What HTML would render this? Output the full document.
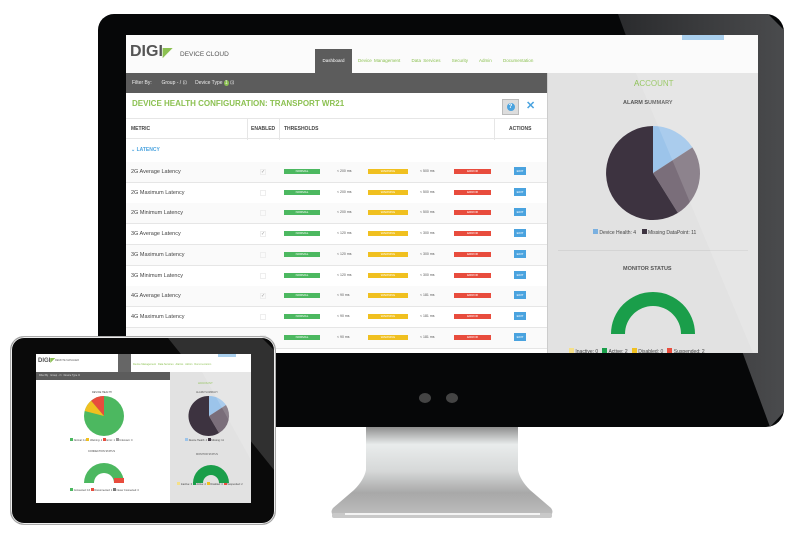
<!DOCTYPE html>
<html><head><meta charset="utf-8"><style>
*{margin:0;padding:0;box-sizing:border-box}
body{width:800px;height:537px;background:#fff;position:relative;overflow:hidden;font-family:"Liberation Sans",sans-serif}
.a{position:absolute}
.row{position:absolute;left:126px;width:421px;height:21px;border-bottom:1px solid #e6e6e6;font-size:5.5px;color:#444}
.row .l{position:absolute;left:5px;top:7px}
.b{position:absolute;top:7px;height:5px;font-size:3px;color:#fff;text-align:center;line-height:5px}
.g{background:#4cb860;left:158px;width:36px}
.y{background:#f0c020;left:242px;width:40px}
.r{background:#e84c3d;left:328px;width:37px}
.t{position:absolute;top:7px;font-size:3.5px;color:#555}
.e{position:absolute;left:388px;top:5px;width:12px;height:8px;background:#4aa3df;font-size:3px;color:#fff;text-align:center;line-height:8px}
.cb{position:absolute;left:134px;top:7px;width:6px;height:6px;border:1px solid #eee;font-size:5px;color:#999;line-height:4px;text-align:center}
.sq{display:inline-block;width:3px;height:3px}
</style></head><body>
<!-- monitor bezel -->
<div class="a" style="left:98px;top:14px;width:686px;height:413px;background:#060708;border-radius:16px 18px 18px 14px"></div>
<svg class="a" style="left:0;top:0" width="800" height="537"><defs><linearGradient id="bz" x1="0" y1="0" x2="1" y2="0"><stop offset="0" stop-color="#2a2b2d"/><stop offset="1" stop-color="#4a4b4d"/></linearGradient></defs><polygon points="618,14 768,14 784,30 784,412 770,427" fill="url(#bz)"/></svg>
<!-- stand -->
<svg class="a" style="left:0;top:0" width="800" height="537"><defs><linearGradient id="st" x1="0" y1="0" x2="0" y2="1"><stop offset="0" stop-color="#8e8e8e"/><stop offset="0.2" stop-color="#e9ecec"/><stop offset="0.5" stop-color="#d6d8d8"/><stop offset="0.75" stop-color="#a8a8a8"/><stop offset="1" stop-color="#bdbdbd"/></linearGradient></defs>
<path d="M366,427 L518,427 L518,470 Q520,480 530,490 L551,508 Q554,512 551,515 L333,515 Q330,512 333,508 L354,490 Q364,480 366,470 Z" fill="url(#st)"/>
<rect x="332" y="513" width="220" height="5" rx="2" fill="#c9c9c9"/><rect x="345" y="513" width="195" height="2" fill="#f4f4f4"/></svg>
<div class="a" style="left:419px;top:393px;width:12px;height:10px;border-radius:50%;background:#444"></div>
<div class="a" style="left:446px;top:393px;width:12px;height:10px;border-radius:50%;background:#444"></div>
<!-- screen -->
<div class="a" style="left:126px;top:35px;width:632px;height:318px;background:#fff;overflow:hidden">
 <div class="a" style="left:0;top:0;width:632px;height:38px;background:#fbfbfb"></div>
 <div class="a" style="left:4px;top:8px;font-size:16px;font-weight:bold;color:#555">DIGI<span style="color:#8cc152;font-size:12px">◤</span></div>
 <div class="a" style="left:54px;top:16px;font-size:6.5px;color:#555">DEVICE CLOUD</div>
 <div class="a" style="left:189px;top:14px;width:37px;height:24px;background:#5c5c5c;color:#fff;font-size:4.5px;text-align:center;line-height:24px">Dashboard</div>
 <div class="a" style="left:232px;top:23px;font-size:4.5px;color:#8cc152;word-spacing:1px">Device Management &nbsp;&nbsp;&nbsp; Data Services &nbsp;&nbsp;&nbsp; Security &nbsp;&nbsp;&nbsp; Admin &nbsp;&nbsp;&nbsp; Documentation</div>
 <div class="a" style="left:556px;top:0;width:42px;height:5px;background:#9cc8ec"></div>
 <div class="a" style="left:0;top:38px;width:421px;height:20px;background:#5c5c5c;color:#eee;font-size:5px;line-height:20px;padding-left:6px">Filter By: &nbsp;&nbsp;&nbsp;&nbsp;&nbsp; Group - / ⊡ &nbsp;&nbsp;&nbsp;&nbsp; Device Type <span style="background:#8cc152;border-radius:50%;padding:0 1px">1</span> ⊡</div>
 <div class="a" style="left:6px;top:64px;font-size:8px;font-weight:bold;color:#8cc152">DEVICE HEALTH CONFIGURATION: TRANSPORT WR21</div>
 <div class="a" style="left:376px;top:64px;width:17px;height:16px;background:#ddd;border:1px solid #bbb"><div style="margin:3px auto;width:8px;height:8px;border-radius:50%;background:#4aa3df;color:#fff;font-size:6px;text-align:center;line-height:8px;font-weight:bold">?</div></div>
 <div class="a" style="left:400px;top:64px;font-size:11px;font-weight:bold;color:#4aa3df">✕</div>
 <div class="a" style="left:0;top:83px;width:421px;height:21px;border-top:1px solid #e6e6e6;border-bottom:1px solid #e6e6e6;font-size:5px;font-weight:bold;color:#444">
  <span class="a" style="left:5px;top:7px">METRIC</span><span class="a" style="left:125px;top:7px">ENABLED</span><span class="a" style="left:158px;top:7px">THRESHOLDS</span><span class="a" style="left:383px;top:7px">ACTIONS</span>
  <div class="a" style="left:121px;top:0;width:1px;height:21px;background:#e6e6e6"></div><div class="a" style="left:153px;top:0;width:1px;height:21px;background:#e6e6e6"></div><div class="a" style="left:368px;top:0;width:1px;height:21px;background:#e6e6e6"></div>
 </div>
 <div class="a" style="left:5px;top:112px;font-size:5px;color:#4aa3df;font-weight:bold">⌄ LATENCY</div>
 <div class="a" style="left:421px;top:38px;width:211px;height:280px;background:#e2e2e2"></div>
 <div class="a" style="left:421px;top:38px;width:1px;height:280px;background:#ccc"></div>
 <div class="a" style="left:508px;top:44px;font-size:8px;color:#8cc152">ACCOUNT</div>
 <div class="a" style="left:497px;top:65px;font-size:5.5px;font-weight:bold;color:#555">ALARM SUMMARY</div>
 <div class="a" style="left:467px;top:194px;font-size:5px;color:#444"><span style="display:inline-block;width:5px;height:5px;background:#7ab0e0"></span> Device Health: 4 &nbsp;&nbsp; <span style="display:inline-block;width:5px;height:5px;background:#3d3340"></span> Missing DataPoint: 11</div>
 <div class="a" style="left:432px;top:215px;width:190px;height:1px;background:#d4d4d4"></div>
 <div class="a" style="left:497px;top:231px;font-size:5.5px;font-weight:bold;color:#555">MONITOR STATUS</div>
 <div class="a" style="left:443px;top:313px;font-size:5px;color:#444"><span style="display:inline-block;width:5px;height:5px;background:#f5e08a"></span> Inactive: 0 &nbsp; <span style="display:inline-block;width:5px;height:5px;background:#1a9e4a"></span> Active: 2 &nbsp; <span style="display:inline-block;width:5px;height:5px;background:#f0c020"></span> Disabled: 0 &nbsp; <span style="display:inline-block;width:5px;height:5px;background:#e84c3d"></span> Suspended: 2</div>
</div>
<div id="rows"></div>
<svg class="a" style="left:0;top:0" width="800" height="537">
 <path d="M653,173 L653,126 A47,47 0 0 1 692.4,147.4 Z" fill="#9cc4ea"/>
 <path d="M653,173 L692.4,147.4 A47,47 0 0 1 677.9,212.9 Z" fill="#7a6e7a"/>
 <path d="M653,173 L677.9,212.9 A47,47 0 1 1 653,126 Z" fill="#3d3340"/>
 <path d="M611,334 A42,42 0 0 1 695,334 L681,334 A28,28 0 0 0 625,334 Z" fill="#1a9e4a"/>
 <polygon points="620,35 758,35 758,353 753,353" fill="#fff" opacity="0.15"/>
</svg>
<!-- tablet -->
<div class="a" style="left:10px;top:336px;width:266px;height:189px;background:#0a0a0a;border-radius:14px;border:1px solid #aaa;box-shadow:0 0 0 1px #eee inset"></div>
<svg class="a" style="left:0;top:0" width="800" height="537"><polygon points="168,338 262,338 274,350 274,470" fill="#555" opacity="0.5"/></svg>
<div class="a" style="left:36px;top:354px;width:215px;height:149px;background:#fff;overflow:hidden;font-size:3px;color:#444">
 <div class="a" style="left:2px;top:3px;font-size:6px;font-weight:bold;color:#555">DIGI<span style="color:#8cc152">◤</span></div>
 <div class="a" style="left:19px;top:5px;font-size:2.5px;color:#666">REMOTE MANAGER</div>
 <div class="a" style="left:82px;top:0;width:13px;height:18px;background:#666"></div>
 <div class="a" style="left:97px;top:9px;font-size:2.5px;color:#8cc152">Device Management &nbsp; Data Services &nbsp; Alarms &nbsp; Admin &nbsp; Documentation</div>
 <div class="a" style="left:182px;top:0;width:18px;height:3px;background:#9cc8ec"></div>
 <div class="a" style="left:0;top:18px;width:134px;height:8px;background:#5c5c5c;color:#ddd;font-size:2.5px;line-height:8px;padding-left:3px">Filter By &nbsp; Group - ⊡ &nbsp; Device Type ⊡</div>
 <div class="a" style="left:134px;top:18px;width:81px;height:131px;background:#e2e2e2"></div>
 <div class="a" style="left:162px;top:27px;font-size:3px;color:#8cc152">ACCOUNT</div>
 <div class="a" style="left:160px;top:37px;font-size:2.5px;color:#555">ALARM SUMMARY</div>
 <div class="a" style="left:56px;top:37px;font-size:2.5px;color:#444">DEVICE HEALTH</div>
 <div class="a" style="left:34px;top:84px;font-size:2.5px"><span class="sq" style="background:#4cb860"></span> Normal: 11 <span class="sq" style="background:#f0c020"></span> Warning: 1 <span class="sq" style="background:#e84c3d"></span> Error: 1 <span class="sq" style="background:#999"></span> Unknown: 0</div>
 <div class="a" style="left:149px;top:84px;font-size:2.5px"><span class="sq" style="background:#9cc4ea"></span> Device Health: 4 <span class="sq" style="background:#3d3340"></span> Missing: 11</div>
 <div class="a" style="left:52px;top:96px;font-size:2.5px;color:#444">CONNECTION STATUS</div>
 <div class="a" style="left:160px;top:99px;font-size:2.5px;color:#555">MONITOR STATUS</div>
 <div class="a" style="left:34px;top:134px;font-size:2.5px"><span class="sq" style="background:#4cb860"></span> Connected: 16 <span class="sq" style="background:#e84c3d"></span> Disconnected: 1 <span class="sq" style="background:#777"></span> Never Connected: 0</div>
 <div class="a" style="left:141px;top:128px;font-size:2.5px;width:70px"><span class="sq" style="background:#f5e08a"></span> Inactive: 0 <span class="sq" style="background:#1a9e4a"></span> Active: 2 <span class="sq" style="background:#f0c020"></span> Disabled: 0 <span class="sq" style="background:#e84c3d"></span> Suspended: 2</div>
</div>
<svg class="a" style="left:0;top:0" width="800" height="537">
 <circle cx="104" cy="416" r="20" fill="#4cb860"/>
 <path d="M104,416 L104,396 A20,20 0 0 0 91.1,400.7 Z" fill="#e84c3d"/>
 <path d="M104,416 L91.1,400.7 A20,20 0 0 0 84.7,411 Z" fill="#f0c020"/>
 <path d="M209,416 L209,396 A20,20 0 0 1 226,405 Z" fill="#9cc4ea"/>
 <path d="M209,416 L226,405 A20,20 0 0 1 219,433 Z" fill="#7a6e7a"/>
 <path d="M209,416 L219,433 A20,20 0 1 1 209,396 Z" fill="#3d3340"/>
 <path d="M84,483 A20,20 0 0 1 124,483 L114,483 A10,10 0 0 0 94,483 Z" fill="#4cb860"/>
 <rect x="114" y="478" width="10" height="5" fill="#e84c3d"/>
 <path d="M193,483 A18,18 0 0 1 229,483 L219,483 A8,8 0 0 0 203,483 Z" fill="#1a9e4a"/>
 <polygon points="192,354 251,354 251,460" fill="#fff" opacity="0.15"/>
</svg>
<script>
var names=["2G Average Latency","2G Maximum Latency","2G Minimum Latency","3G Average Latency","3G Maximum Latency","3G Minimum Latency","4G Average Latency","4G Maximum Latency",""];
var t1=["< 200 ms","< 200 ms","< 200 ms","< 120 ms","< 120 ms","< 120 ms","< 90 ms","< 90 ms","< 90 ms"];
var t2=["< 500 ms","< 500 ms","< 500 ms","< 300 ms","< 300 ms","< 300 ms","< 181 ms","< 181 ms","< 181 ms"];
var h="";
for(var i=0;i<9;i++){var y=162+i*20.7;
h+='<div class="row" style="top:'+y+'px;background:'+(i%2?'#fff':'#fafafa')+'"><span class="l">'+names[i]+'</span><div class="cb">'+(i%3==0?'✓':'')+'</div><div class="b g">NORMAL</div><span class="t" style="left:211px">'+t1[i]+'</span><div class="b y">WARNING</div><span class="t" style="left:294px">'+t2[i]+'</span><div class="b r">ERROR</div><div class="e">EDIT</div></div>';}
document.getElementById('rows').outerHTML=h;
</script>
</body></html>
